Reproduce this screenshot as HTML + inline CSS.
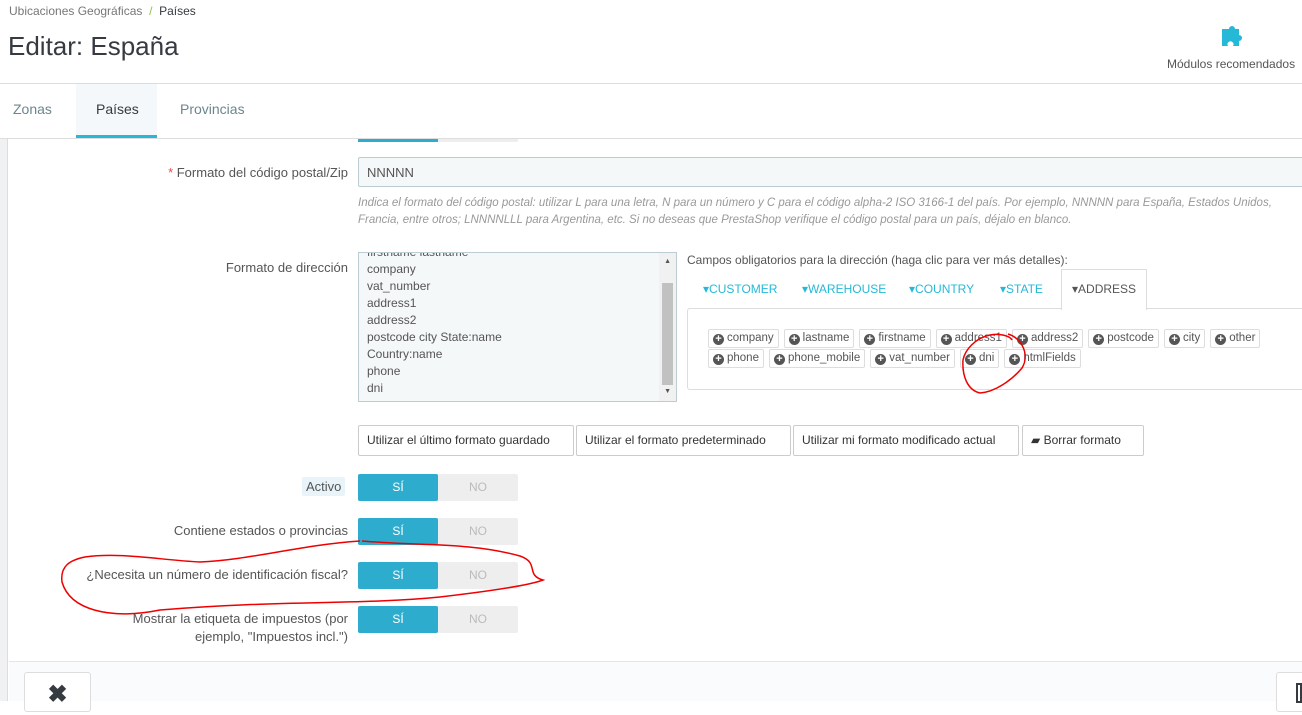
<!DOCTYPE html>
<html><head><meta charset="utf-8"><style>
*{box-sizing:border-box;margin:0;padding:0}
body{width:1302px;height:701px;overflow:hidden;background:#fff;font-family:"Liberation Sans",sans-serif;color:#555;position:relative;font-size:12px}
.a{position:absolute;white-space:nowrap}
.lbl{position:absolute;right:954px;text-align:right;font-size:13px;color:#555}
.tog{position:absolute;left:358px;width:160px;height:27px;background:#eee;border-radius:2px;font-size:12px}
.tog .y{position:absolute;left:0;top:0;width:80px;height:27px;background:#2eacce;color:#fff;text-align:center;line-height:27px;border-radius:2px}
.tog .n{position:absolute;left:80px;top:0;width:80px;height:27px;color:#bbb;text-align:center;line-height:27px}
.btn{position:absolute;top:425px;height:31px;border:1px solid #ccc;border-radius:2px;background:#fff;font-size:12px;color:#333;line-height:29px;padding:0 8px}
.tag{display:inline-block;border:1px solid #ddd;border-radius:2px;height:19px;line-height:17px;padding:0 4px 0 4px;margin:0 5px 1px 0;font-size:11.5px;color:#555;background:#fff}
.tag b{display:inline-block;width:11px;height:11px;border-radius:50%;background:#555;color:#fff;font-size:11px;line-height:11px;text-align:center;vertical-align:-1px;margin-right:3px}
.ft{position:absolute;top:270px;height:38px;line-height:38px;font-size:12px;color:#25b9d7;font-family:"Liberation Sans Narrow","Liberation Sans",sans-serif}
</style></head><body>
<div class="a" style="left:9px;top:4px;font-size:12px;color:#777">Ubicaciones Geográficas <span style="color:#8bc34a">&nbsp;/&nbsp;</span> <span style="color:#363a41">Países</span></div>
<div class="a" style="left:8px;top:31px;font-size:26px;color:#363a41">Editar: España</div>
<svg class="a" style="left:1220px;top:21px" width="28" height="26" viewBox="0 0 28 26"><path d="M2 8h7a3 3 0 1 1 6 0h4v6a3 3 0 1 1 0 6v5h-6a3 3 0 1 0-5 0H2z" fill="#25b9d7"/></svg>
<div class="a" style="left:1167px;top:57px;font-size:12px;color:#555">Módulos recomendados</div>
<div class="a" style="left:0;top:83px;width:1302px;height:1px;background:#ddd"></div>
<div class="a" style="left:76px;top:84px;width:81px;height:54px;background:#f4f8fa;border-bottom:3px solid #25b9d7"></div>
<div class="a" style="left:13px;top:101px;font-size:14px;color:#6c868e">Zonas</div>
<div class="a" style="left:96px;top:101px;font-size:14px;color:#363a41">Países</div>
<div class="a" style="left:180px;top:101px;font-size:14px;color:#6c868e">Provincias</div>
<div class="a" style="left:0;top:138px;width:1302px;height:1px;background:#ddd"></div>
<div class="a" style="left:0;top:139px;width:8px;height:562px;background:#eff1f2;border-right:1px solid #ddd"></div>
<div class="a" style="left:358px;top:139px;width:160px;height:3px;background:#eee"><div style="width:80px;height:3px;background:#2eacce"></div></div>

<div class="lbl" style="top:165px"><span style="color:#e05050">*</span> Formato del código postal/Zip</div>
<div class="a" style="left:358px;top:157px;width:950px;height:30px;background:#f5f8f9;border:1px solid #bbcdd2;border-radius:2px;padding:7px 8px;font-size:13px;color:#555">NNNNN</div>
<div class="a" style="left:358px;top:195px;font-size:11.5px;font-style:italic;color:#999;line-height:17px;white-space:normal;width:945px">Indica el formato del código postal: utilizar L para una letra, N para un número y C para el código alpha-2 ISO 3166-1 del país. Por ejemplo, NNNNN para España, Estados Unidos, Francia, entre otros; LNNNNLLL para Argentina, etc. Si no deseas que PrestaShop verifique el código postal para un país, déjalo en blanco.</div>

<div class="lbl" style="top:260px">Formato de dirección</div>
<div class="a" style="left:358px;top:252px;width:319px;height:150px;background:#f5f8f9;border:1px solid #bbcdd2;overflow:hidden">
<div style="position:absolute;left:8px;top:-9px;font-size:12px;line-height:17px;color:#555">firstname lastname<br>company<br>vat_number<br>address1<br>address2<br>postcode city State:name<br>Country:name<br>phone<br>dni</div>
<div style="position:absolute;right:0;top:0;width:17px;height:148px;background:#f1f1f1"></div>
<div style="position:absolute;right:3px;top:30px;width:11px;height:102px;background:#c1c1c1"></div>
<div style="position:absolute;right:5px;top:5px;font-size:7px;color:#555">▲</div>
<div style="position:absolute;right:5px;top:135px;font-size:7px;color:#555">▼</div>
</div>

<div class="a" style="left:687px;top:253px;font-size:12px;color:#555">Campos obligatorios para la dirección (haga clic para ver más detalles):</div>
<div class="a" style="left:1061px;top:269px;width:86px;height:41px;background:#fff;border:1px solid #ddd;border-bottom:none;z-index:2"></div>
<div class="ft" style="left:703px">▾CUSTOMER</div>
<div class="ft" style="left:802px">▾WAREHOUSE</div>
<div class="ft" style="left:909px">▾COUNTRY</div>
<div class="ft" style="left:1000px">▾STATE</div>
<div class="ft" style="left:1072px;color:#555;z-index:3">▾ADDRESS</div>
<div class="a" style="left:687px;top:308px;width:630px;height:82px;border:1px solid #ddd;border-radius:3px"></div>
<div class="a" style="left:708px;top:329px;width:600px;white-space:normal;line-height:0">
<span class="tag"><b>+</b>company</span><span class="tag"><b>+</b>lastname</span><span class="tag"><b>+</b>firstname</span><span class="tag"><b>+</b>address1</span><span class="tag"><b>+</b>address2</span><span class="tag"><b>+</b>postcode</span><span class="tag"><b>+</b>city</span><span class="tag"><b>+</b>other</span><br><span class="tag"><b>+</b>phone</span><span class="tag"><b>+</b>phone_mobile</span><span class="tag"><b>+</b>vat_number</span><span class="tag"><b>+</b>dni</span><span class="tag"><b>+</b>htmlFields</span></div>

<div class="btn" style="left:358px;width:216px">Utilizar el último formato guardado</div>
<div class="btn" style="left:576px;width:215px">Utilizar el formato predeterminado</div>
<div class="btn" style="left:793px;width:226px">Utilizar mi formato modificado actual</div>
<div class="btn" style="left:1022px;width:122px">▰ Borrar formato</div>

<div class="a" style="left:302px;top:477px;padding:2px 4px;background:#e8f4f9;font-size:13px;color:#555;border-radius:2px">Activo</div>
<div class="tog" style="top:474px"><div class="y">SÍ</div><div class="n">NO</div></div>
<div class="lbl" style="top:523px">Contiene estados o provincias</div>
<div class="tog" style="top:518px"><div class="y">SÍ</div><div class="n">NO</div></div>
<div class="lbl" style="top:567px">¿Necesita un número de identificación fiscal?</div>
<div class="tog" style="top:562px"><div class="y">SÍ</div><div class="n">NO</div></div>
<div class="lbl" style="top:610px;line-height:18px">Mostrar la etiqueta de impuestos (por<br>ejemplo, "Impuestos incl.")</div>
<div class="tog" style="top:606px"><div class="y">SÍ</div><div class="n">NO</div></div>

<div class="a" style="left:9px;top:661px;width:1293px;height:40px;background:#fafbfc;border-top:1px solid #e5e5e5"></div>
<div class="a" style="left:24px;top:672px;width:67px;height:40px;background:#fff;border:1px solid #ddd;border-radius:3px;text-align:center;font-size:24px;font-weight:bold;color:#363a41;line-height:40px;padding-top:2px">✖</div>
<div class="a" style="left:1276px;top:672px;width:40px;height:40px;background:#fff;border:1px solid #ddd;border-radius:3px"><div style="position:absolute;left:19px;top:10px;width:6px;height:20px;border:2px solid #363a41"></div></div>

<svg class="a" style="left:0;top:0" width="1302" height="701" viewBox="0 0 1302 701" fill="none" stroke="#e00" stroke-width="1.5">
<path d="M362 541 C420 546 470 542 520 556 C540 563 525 575 543 580 C530 585 500 590 440 597 C360 605 280 600 160 610 C110 620 70 610 62 582 C60 566 70 560 85 557 C120 552 160 560 200 562 C250 560 300 545 360 541"/>
<path d="M1008 334 C1022 338 1030 355 1022 368 C1012 380 995 392 980 393 C967 390 962 375 963 360 C965 350 975 338 990 335 C1000 333 1010 336 1012 340"/>
</svg>
</body></html>
